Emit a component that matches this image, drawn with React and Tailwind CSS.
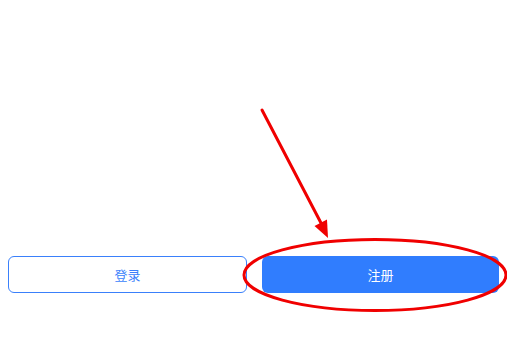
import React from "react";

export default function App() {
  return (
    <div
      className="relative w-[507px] h-[338px] bg-white overflow-hidden"
      style={{ fontFamily: '"Noto Sans CJK SC", "Noto Sans", sans-serif' }}
    >
      <div className="flex gap-[15px] px-[8px] pt-[256px]">
        <button className="flex-1 h-[37px] rounded-[6px] border border-[#3a80fb] bg-white text-[13px] text-[#3a7ffb] flex items-center justify-center">
          登录
        </button>
        <button className="flex-1 h-[37px] rounded-[6px] bg-[#307dfe] text-[13px] text-white flex items-center justify-center">
          注册
        </button>
      </div>
      <svg
        className="absolute left-0 top-0 pointer-events-none"
        width="507"
        height="338"
        viewBox="0 0 507 338"
      >
        <line x1="262" y1="110" x2="321" y2="223" stroke="#f00000" strokeWidth="3" strokeLinecap="round" />
        <polygon points="328,238 314.5,226 327,219.5" fill="#f00000" />
        <ellipse cx="375" cy="275" rx="131" ry="35.5" fill="none" stroke="#f00000" strokeWidth="3" />
      </svg>
    </div>
  );
}
